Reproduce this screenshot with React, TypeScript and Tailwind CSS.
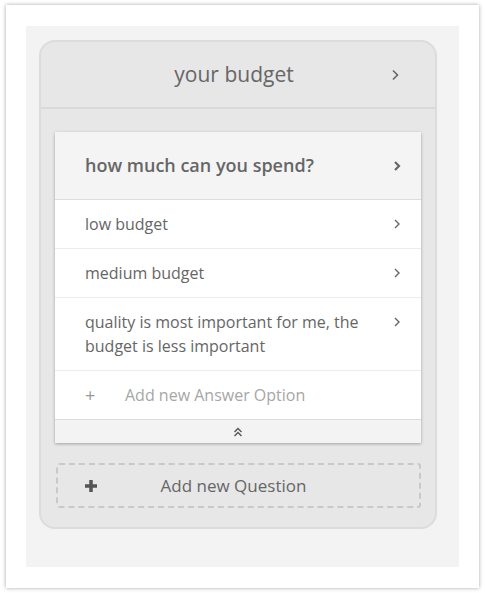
import React from "react";

const Chevron = ({ bold = false }: { bold?: boolean }) => (
  <svg width="8" height="12" viewBox="0 0 8 12" className="shrink-0">
    <path
      d="M2 2 L6 6 L2 10"
      fill="none"
      stroke="#666"
      strokeWidth={bold ? 2.2 : 1.4}
    />
  </svg>
);

const answers = [
  "low budget",
  "medium budget",
  "quality is most important for me, the budget is less important",
];

export default function App() {
  return (
    <div
      className="w-[485px] h-[593px] bg-white pt-[5px] pl-[6px]"
      style={{ fontFamily: '"Open Sans", "Noto Sans", sans-serif' }}
    >
      <div className="w-[473px] h-[583px] bg-white shadow-[0_0_4px_rgba(0,0,0,0.35)] px-[20px] py-[21px]">
        <div className="w-[433px] h-[541px] bg-[#f3f3f3] pl-[13px] pt-[14px]">
          <div className="w-[398px] h-[489px] bg-[#e7e7e7] border-2 border-[#dcdcdc] rounded-[16px] text-[#666]">
            <div className="h-[67px] flex items-center border-b-2 border-[#d9d9d9] pl-[35px] pr-[35px]">
              <div className="flex-1 text-center text-[21px] pl-[2px]">your budget</div>
              <svg width="10" height="14" viewBox="0 0 10 14" className="shrink-0">
                <path d="M3 2.5 L7.5 7 L3 11.5" fill="none" stroke="#666" strokeWidth="1.6" />
              </svg>
            </div>
            <div className="pt-[23px] px-[14px]">
              <div className="bg-white shadow-[0_1px_3px_rgba(0,0,0,0.3)]">
                <div className="h-[68px] bg-[#f4f4f4] border-b border-[#dcdcdc] flex items-center pl-[30px] pr-[20px]">
                  <div className="flex-1 text-[18px] font-semibold">how much can you spend?</div>
                  <Chevron bold />
                </div>
                {answers.map((a) => (
                  <div
                    key={a}
                    className="flex items-start border-b border-[#ececec] pl-[30px] pr-[20px] py-[12px] text-[16px] leading-[24px]"
                  >
                    <div className="flex-1 pr-[20px]">{a}</div>
                    <div className="h-[24px] flex items-center">
                      <Chevron />
                    </div>
                  </div>
                ))}
                <div className="h-[48px] flex items-center pl-[30px] text-[16px] text-[#a6a6a6]">
                  <span className="w-[40px] text-[18px] text-[#999]">+</span>
                  <span>Add new Answer Option</span>
                </div>
                <div className="h-[24px] bg-[#f3f3f3] border-t border-[#dcdcdc] flex items-center justify-center">
                  <svg width="12" height="12" viewBox="0 0 12 12">
                    <path d="M2.5 6 L6 2.5 L9.5 6 M2.5 10 L6 6.5 L9.5 10" fill="none" stroke="#555" strokeWidth="1.4" />
                  </svg>
                </div>
              </div>
              <div className="mt-[20px] ml-[1px] w-[365px] h-[45px] border-2 border-dashed border-[#c9c9c9] rounded-[3px] flex items-center">
                <div className="w-[28px] ml-[26px] flex items-center">
                  <svg width="14" height="14" viewBox="0 0 14 14">
                    <path d="M7 1 V13 M1 7 H13" stroke="#555" strokeWidth="3.5" />
                  </svg>
                </div>
                <div className="flex-1 text-center text-[17px] pr-[64px]">Add new Question</div>
              </div>
            </div>
          </div>
        </div>
      </div>
    </div>
  );
}
